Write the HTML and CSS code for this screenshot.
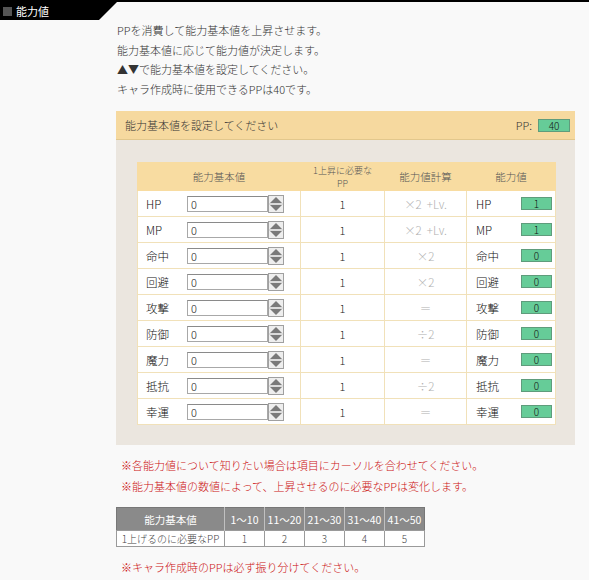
FILE: index.html
```html
<!DOCTYPE html>
<html lang="ja">
<head>
<meta charset="utf-8">
<title>能力値</title>
<link rel="stylesheet" href="styles.css">
</head>
<body>
<div class="topbar">
  <div class="tab"><span class="sq"></span><span class="tab-text">能力値</span></div>
</div>
<div class="content">
  <div class="intro">
    <p>PPを消費して能力基本値を上昇させます。</p>
    <p>能力基本値に応じて能力値が決定します。</p>
    <p>▲▼で能力基本値を設定してください。</p>
    <p>キャラ作成時に使用できるPPは40です。</p>
  </div>

  <div class="panel">
    <div class="panel-head">
      <span class="panel-title">能力基本値を設定してください</span>
      <span class="pp">PP: <span class="gbox gbox-pp">40</span></span>
    </div>
    <div class="panel-body">
      <table class="stats">
        <colgroup>
          <col class="c1"><col class="c2"><col class="c3"><col class="c4">
        </colgroup>
        <thead>
          <tr>
            <th>能力基本値</th>
            <th class="small"><span class="l1">1上昇に必要な</span><span class="l2">PP</span></th>
            <th>能力値計算</th>
            <th>能力値</th>
          </tr>
        </thead>
        <tbody>
          <tr><td><div class="base"><span class="lbl">HP</span><span class="inp">0</span><svg class="spin" viewBox="0 0 16 18" width="16" height="18"><rect x="0.5" y="0.5" width="15" height="17" fill="#eeeeee" stroke="#a0a0a0"/><line x1="1" y1="9" x2="15" y2="9" stroke="#c8c8c8"/><polygon points="8,2 14,8 2,8" fill="#7a7a7a"/><polygon points="2,10 14,10 8,16" fill="#7a7a7a"/></svg></div></td><td class="need">1</td><td class="calc">×2 &nbsp;+Lv.</td><td><div class="res"><span class="rl">HP</span><span class="gbox">1</span></div></td></tr>
          <tr><td><div class="base"><span class="lbl">MP</span><span class="inp">0</span><svg class="spin" viewBox="0 0 16 18" width="16" height="18"><rect x="0.5" y="0.5" width="15" height="17" fill="#eeeeee" stroke="#a0a0a0"/><line x1="1" y1="9" x2="15" y2="9" stroke="#c8c8c8"/><polygon points="8,2 14,8 2,8" fill="#7a7a7a"/><polygon points="2,10 14,10 8,16" fill="#7a7a7a"/></svg></div></td><td class="need">1</td><td class="calc">×2 &nbsp;+Lv.</td><td><div class="res"><span class="rl">MP</span><span class="gbox">1</span></div></td></tr>
          <tr><td><div class="base"><span class="lbl">命中</span><span class="inp">0</span><svg class="spin" viewBox="0 0 16 18" width="16" height="18"><rect x="0.5" y="0.5" width="15" height="17" fill="#eeeeee" stroke="#a0a0a0"/><line x1="1" y1="9" x2="15" y2="9" stroke="#c8c8c8"/><polygon points="8,2 14,8 2,8" fill="#7a7a7a"/><polygon points="2,10 14,10 8,16" fill="#7a7a7a"/></svg></div></td><td class="need">1</td><td class="calc">×2</td><td><div class="res"><span class="rl">命中</span><span class="gbox">0</span></div></td></tr>
          <tr><td><div class="base"><span class="lbl">回避</span><span class="inp">0</span><svg class="spin" viewBox="0 0 16 18" width="16" height="18"><rect x="0.5" y="0.5" width="15" height="17" fill="#eeeeee" stroke="#a0a0a0"/><line x1="1" y1="9" x2="15" y2="9" stroke="#c8c8c8"/><polygon points="8,2 14,8 2,8" fill="#7a7a7a"/><polygon points="2,10 14,10 8,16" fill="#7a7a7a"/></svg></div></td><td class="need">1</td><td class="calc">×2</td><td><div class="res"><span class="rl">回避</span><span class="gbox">0</span></div></td></tr>
          <tr><td><div class="base"><span class="lbl">攻撃</span><span class="inp">0</span><svg class="spin" viewBox="0 0 16 18" width="16" height="18"><rect x="0.5" y="0.5" width="15" height="17" fill="#eeeeee" stroke="#a0a0a0"/><line x1="1" y1="9" x2="15" y2="9" stroke="#c8c8c8"/><polygon points="8,2 14,8 2,8" fill="#7a7a7a"/><polygon points="2,10 14,10 8,16" fill="#7a7a7a"/></svg></div></td><td class="need">1</td><td class="calc">＝</td><td><div class="res"><span class="rl">攻撃</span><span class="gbox">0</span></div></td></tr>
          <tr><td><div class="base"><span class="lbl">防御</span><span class="inp">0</span><svg class="spin" viewBox="0 0 16 18" width="16" height="18"><rect x="0.5" y="0.5" width="15" height="17" fill="#eeeeee" stroke="#a0a0a0"/><line x1="1" y1="9" x2="15" y2="9" stroke="#c8c8c8"/><polygon points="8,2 14,8 2,8" fill="#7a7a7a"/><polygon points="2,10 14,10 8,16" fill="#7a7a7a"/></svg></div></td><td class="need">1</td><td class="calc">÷2</td><td><div class="res"><span class="rl">防御</span><span class="gbox">0</span></div></td></tr>
          <tr><td><div class="base"><span class="lbl">魔力</span><span class="inp">0</span><svg class="spin" viewBox="0 0 16 18" width="16" height="18"><rect x="0.5" y="0.5" width="15" height="17" fill="#eeeeee" stroke="#a0a0a0"/><line x1="1" y1="9" x2="15" y2="9" stroke="#c8c8c8"/><polygon points="8,2 14,8 2,8" fill="#7a7a7a"/><polygon points="2,10 14,10 8,16" fill="#7a7a7a"/></svg></div></td><td class="need">1</td><td class="calc">＝</td><td><div class="res"><span class="rl">魔力</span><span class="gbox">0</span></div></td></tr>
          <tr><td><div class="base"><span class="lbl">抵抗</span><span class="inp">0</span><svg class="spin" viewBox="0 0 16 18" width="16" height="18"><rect x="0.5" y="0.5" width="15" height="17" fill="#eeeeee" stroke="#a0a0a0"/><line x1="1" y1="9" x2="15" y2="9" stroke="#c8c8c8"/><polygon points="8,2 14,8 2,8" fill="#7a7a7a"/><polygon points="2,10 14,10 8,16" fill="#7a7a7a"/></svg></div></td><td class="need">1</td><td class="calc">÷2</td><td><div class="res"><span class="rl">抵抗</span><span class="gbox">0</span></div></td></tr>
          <tr><td><div class="base"><span class="lbl">幸運</span><span class="inp">0</span><svg class="spin" viewBox="0 0 16 18" width="16" height="18"><rect x="0.5" y="0.5" width="15" height="17" fill="#eeeeee" stroke="#a0a0a0"/><line x1="1" y1="9" x2="15" y2="9" stroke="#c8c8c8"/><polygon points="8,2 14,8 2,8" fill="#7a7a7a"/><polygon points="2,10 14,10 8,16" fill="#7a7a7a"/></svg></div></td><td class="need">1</td><td class="calc">＝</td><td><div class="res"><span class="rl">幸運</span><span class="gbox">0</span></div></td></tr>
        </tbody>
      </table>
    </div>
  </div>

  <div class="notes">
    <p>※各能力値について知りたい場合は項目にカーソルを合わせてください。</p>
    <p>※能力基本値の数値によって、上昇させるのに必要なPPは変化します。</p>
  </div>

  <table class="cost">
    <tr class="cost-head">
      <th class="k1">能力基本値</th><th>1～10</th><th>11～20</th><th>21～30</th><th>31～40</th><th>41～50</th>
    </tr>
    <tr class="cost-row">
      <td class="k1">1上げるのに必要なPP</td><td>1</td><td>2</td><td>3</td><td>4</td><td>5</td>
    </tr>
  </table>

  <p class="note-last">※キャラ作成時のPPは必ず振り分けてください。</p>
</div>
</body>
</html>
```

FILE: styles.css
```css
* { box-sizing: border-box; }
html, body { margin: 0; padding: 0; }
body {
  background: #f9f9f9;
  font-family: "Noto Sans CJK JP", "Liberation Sans", sans-serif;
  font-size: 11px;
  font-weight: 300;
  color: #222;
  width: 589px;
  height: 580px;
  overflow: hidden;
}
p { margin: 0; }

.topbar {
  border-top: 2px solid #000;
  height: 20px;
}
.tab {
  width: 117px;
  height: 18px;
  background: #000;
  clip-path: polygon(0 0, 117px 0, 99px 100%, 0 100%);
  display: flex;
  align-items: center;
  color: #fff;
  font-weight: 400;
  padding-left: 3px;
}
.sq {
  width: 9px;
  height: 9px;
  background: #555;
  margin-right: 4px;
}
.tab-text { line-height: 18px; }

.content { margin-left: 116px; width: 460px; }

.intro { padding-top: 1px; margin-left: 1px; color: #333; }
.intro p { line-height: 19.5px; }

.panel { margin-top: 12px; width: 459px; }
.panel-head {
  height: 29px;
  background: #f6d99f;
  border-bottom: 1px solid #e2c78c;
  display: flex;
  align-items: center;
  justify-content: space-between;
  padding: 0 5px 0 9px;
  color: #333;
}
.pp { display: flex; align-items: center; gap: 6px; }
.gbox {
  display: inline-block;
  width: 31px;
  height: 13px;
  line-height: 11px;
  background: #66cc98;
  border: 1px solid #5f9c7c;
  text-align: center;
  font-size: 10px;
  color: #111;
}
.gbox-pp { width: 32px; }

.panel-body {
  background: #ebe6df;
  padding: 22px 20px 20px 21px;
}
.stats {
  width: 418px;
  border-collapse: collapse;
  table-layout: fixed;
  background: #fff;
}
.stats .c1 { width: 163px; }
.stats .c2 { width: 84px; }
.stats .c3 { width: 82px; }
.stats .c4 { width: 89px; }
.stats th {
  background: #f8dca1;
  height: 28px;
  font-weight: 300;
  color: #555;
  font-size: 10.5px;
  border: 1px solid #f8dca1;
  padding: 0;
}
.stats th.small { font-size: 9px; line-height: 13px; }
.stats th.small span { display: block; height: 13px; }
.stats td {
  height: 26px;
  border: 1px solid #f1e1b9;
  padding: 0;
  vertical-align: middle;
}
.base { display: flex; align-items: center; padding-left: 8px; }
.lbl { width: 41px; color: #111; font-size: 11.5px; }
.inp {
  width: 81px;
  height: 16px;
  border: 1px solid #a8a8a8;
  border-top-color: #8a8a8a;
  background: #fff;
  padding-left: 3px;
  line-height: 14px;
  font-size: 11px;
  color: #222;
}
.spin { display: block; flex: none; }
.need { text-align: center; color: #222; }
.calc { text-align: center; color: #b0b0b0; font-size: 11.5px; }
.res { display: flex; align-items: center; padding-left: 9px; }
.res .rl { width: 45px; color: #111; font-size: 11.5px; }

.notes { margin-top: 10px; margin-left: 5px; color: #cc1111; }
.notes p { line-height: 21px; }

.cost {
  margin-top: 10px;
  border-collapse: collapse;
  border: 1px solid #777;
  table-layout: fixed;
  width: 307px;
}
.cost th, .cost td { padding: 0; text-align: center; }
.cost-head th {
  background: #8a8a8a;
  color: #fff;
  font-weight: 400;
  font-size: 10.5px;
  height: 23px;
  border-left: 1px solid #c0c0c0;
  width: 40px;
}
.cost-head th.k1 { width: 108px; border-left: none; }
.cost-row td {
  background: #fff;
  color: #444;
  font-size: 10px;
  height: 16px;
  border: 1px solid #9a9a9a;
  line-height: 14px;
}
.note-last { margin-top: 10px; margin-left: 5px; color: #cc1111; line-height: 20px; }
```
